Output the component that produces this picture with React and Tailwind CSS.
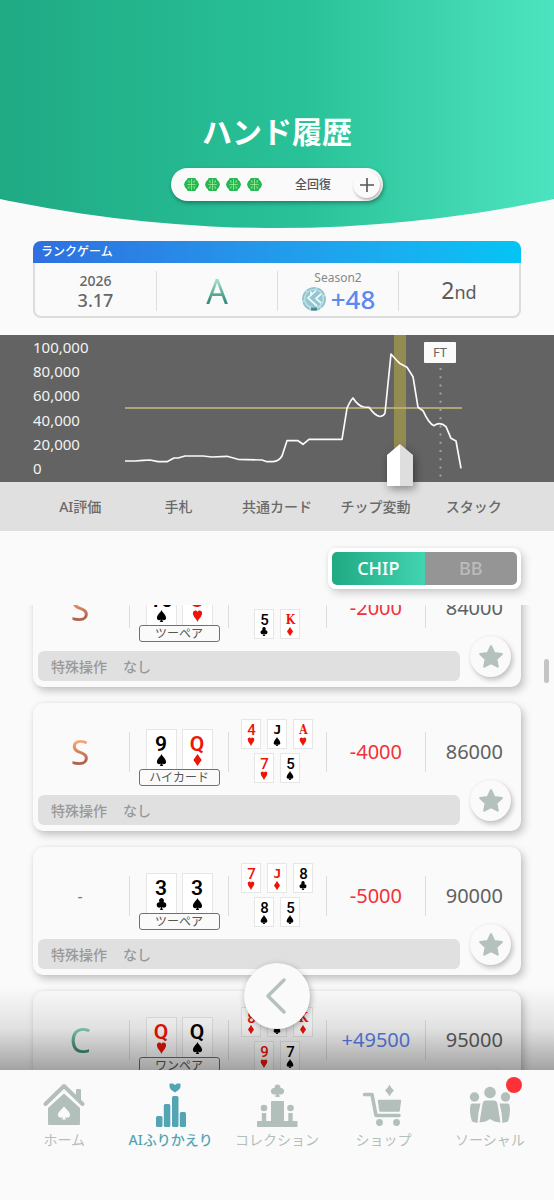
import React, { useState } from 'react';

const SUIT_PATHS = {
  spade: 'M12 0C14 5 22 10 22 16c0 4-5 6-8 3 0 3 1 4 2 5H8c1-1 2-2 2-5-3 3-8 1-8-3C2 10 10 5 12 0z',
  heart: 'M12 24C10 18 2 13 2 6.500 2 1 9-1 12 4c3-5 10-3 10 2.500C22 13 14 18 12 24z',
  diamond: 'M12 0l9 12-9 12L3 12z',
  club: 'M12 0a5.200 5.200 0 0 1 4 8.600 5.400 5.400 0 1 1-2.500 9.400c0 3 1 5 2.500 6H8c1.500-1 2.500-3 2.500-6A5.400 5.400 0 1 1 8 8.600 5.200 5.200 0 0 1 12 0z',
};

const SUITS = { s: 'spade', h: 'heart', d: 'diamond', c: 'club' };

const HANDS = [
  {
    id: 1,
    grade: 'S',
    hole: ['10s', '8h'],
    made: 'ツーペア',
    board: ['10h', '8c', '2d', '5c', 'Kd'],
    change: '-2000',
    stack: '84000',
  },
  {
    id: 2,
    grade: 'S',
    hole: ['9s', 'Qd'],
    made: 'ハイカード',
    board: ['4h', 'Js', 'Ah', '7h', '5s'],
    change: '-4000',
    stack: '86000',
  },
  {
    id: 3,
    grade: '-',
    hole: ['3c', '3s'],
    made: 'ツーペア',
    board: ['7h', 'Jd', '8c', '8s', '5s'],
    change: '-5000',
    stack: '90000',
  },
  {
    id: 4,
    grade: 'C',
    hole: ['Qh', 'Qs'],
    made: 'ワンペア',
    board: ['8d', '4s', 'Kd', '9h', '7s'],
    change: '+49500',
    stack: '95000',
  },
];

const COLUMNS = ['AI評価', '手札', '共通カード', 'チップ変動', 'スタック'];
const AXIS = ['100,000', '80,000', '60,000', '40,000', '20,000', '0'];

const GRADE_COLORS = {
  S: 'bg-linear-to-b from-[#f0a878] from-25% to-[#b0604c] to-75% bg-clip-text text-transparent',
  A: 'bg-linear-to-b from-[#9adcc8] from-25% to-[#3a9080] to-75% bg-clip-text text-transparent',
  C: 'bg-linear-to-b from-[#84cdb8] from-25% to-[#3f8f7c] to-75% bg-clip-text text-transparent',
};

const Suit = ({ name, className }) => (
  <svg viewBox="0 0 24 24" preserveAspectRatio="none" fill="currentColor" className={className}>
    <path d={SUIT_PATHS[name]} />
  </svg>
);

const rankFont = (rank) => {
  if (rank === 'J') return "font-['DejaVu_Sans_Mono',monospace] font-bold text-[13px]";
  if (rank === 'K' || rank === 'A') return "font-['DejaVu_Serif_Condensed','DejaVu_Serif',serif] font-bold text-[12px]";
  return "font-['Roboto',sans-serif] font-medium text-[15px]";
};

const PlayingCard = ({ code, large }) => {
  const rank = code.slice(0, -1);
  const suit = SUITS[code.slice(-1)];
  const color = suit === 'heart' || suit === 'diamond' ? 'text-[#ee1408]' : 'text-black';

  if (large) {
    return (
      <div className={`flex h-10 w-[31px] flex-col items-center border border-b-0 border-[#e6e6e6] bg-white pt-1 ${color}`}>
        <span className="font-['Roboto',sans-serif] text-[21px] leading-5 font-semibold">{rank}</span>
        <Suit name={suit} className="h-3 w-[11px]" />
      </div>
    );
  }
  return (
    <div className={`flex h-[30px] w-5 flex-col items-center border border-[#e6e6e6] bg-white pt-[3px] ${color}`}>
      <span className={`leading-[14px] ${rankFont(rank)}`}>{rank}</span>
      <Suit name={suit} className="h-[9px] w-2" />
    </div>
  );
};

const Grade = ({ value }) =>
  value === '-' ? (
    <span className="text-[16px] text-[#777]">-</span>
  ) : (
    <span className={`text-[34px] leading-10 ${GRADE_COLORS[value]}`}>{value}</span>
  );

const Divided = ({ children }) => (
  <div className="flex h-10 items-center justify-center self-center border-l border-[#dedede]">{children}</div>
);

const HandCard = ({ hand }) => {
  const [starred, setStarred] = useState(false);
  const changeColor = hand.change.startsWith('-') ? 'text-[#f0323c]' : 'text-[#5a82ee]';

  return (
    <article className="rounded-[10px] bg-[#fafafa] pb-[6px] shadow-[3px_4px_9px_rgba(0,0,0,0.22),0_0_4px_rgba(0,0,0,0.06)]">
      <div className="-mx-[2px] grid h-[92px] grid-cols-5 pt-[6px]">
        <div className="flex items-center justify-center">
          <Grade value={hand.grade} />
        </div>
        <Divided>
          <div className="flex h-[88px] flex-col items-center pt-[21px]">
            <div className="flex gap-[5px]">
              {hand.hole.map((code) => (
                <PlayingCard key={code} code={code} large />
              ))}
            </div>
            <div className="h-[17px] w-[81px] rounded-[3px] border border-[#707070] bg-[#fafafa] text-center text-[12px] leading-[15px] text-[#555]">
              {hand.made}
            </div>
          </div>
        </Divided>
        <Divided>
          <div className="flex h-[88px] w-[72px] flex-wrap content-start justify-center gap-x-[6px] gap-y-1 pt-[11px]">
            {hand.board.map((code) => (
              <PlayingCard key={code} code={code} />
            ))}
          </div>
        </Divided>
        <Divided>
          <span className={`text-[20px] leading-6 ${changeColor}`}>{hand.change}</span>
        </Divided>
        <Divided>
          <span className="text-[20px] leading-6 text-[#616161]">{hand.stack}</span>
        </Divided>
      </div>

      <div className="flex items-end gap-[10px] pr-[10px] pl-[5px]">
        <div className="flex h-[30px] flex-1 items-center gap-4 rounded-[6px] bg-[#e0e0e0] px-[13px] text-[14px] font-medium text-[#999]">
          <span>特殊操作</span>
          <span>なし</span>
        </div>
        <button
          type="button"
          aria-label="お気に入り"
          aria-pressed={starred}
          onClick={() => setStarred(!starred)}
          className="-mt-[15px] mb-1 flex size-[41px] items-center justify-center rounded-full bg-[#fafafa] shadow-[2px_3px_5px_rgba(0,0,0,0.22),0_0_3px_rgba(0,0,0,0.06)]"
        >
          <svg
            viewBox="0 0 24 24"
            className={`size-[26px] ${starred ? 'text-[#f2b840]' : 'text-[#b5c2bc]'}`}
            fill="currentColor"
            stroke="currentColor"
            strokeWidth="2"
            strokeLinejoin="round"
          >
            <path d="M12 2l3 6.300 7 .9-5.100 4.800 1.300 6.900L12 17.600l-6.200 3.300L7.100 14 2 9.200l7-.9z" />
          </svg>
        </button>
      </div>
    </article>
  );
};

const BrainIcon = () => (
  <svg viewBox="0 0 16 16" className="size-[15px]">
    <path d="M4 1h8l1 2 2 2 1 3-1 3-2 2-1 2H4l-1-2-2-2-1-3 1-3 2-2z" fill="#25b850" />
    <path
      d="M8 2v12M3.500 8h9M5 3.500V5.500h1.500M11 3.500V5.500H9.500M5 12.500v-2h1.500M11 12.500v-2H9.500"
      stroke="#a4eea0"
      strokeWidth="0.800"
      fill="none"
    />
  </svg>
);

const CoinIcon = () => (
  <svg viewBox="0 0 26 26" className="size-[26px]">
    <circle cx="13" cy="13" r="12" fill="#b9dde3" />
    <circle cx="13" cy="13" r="11" fill="none" stroke="#8fc0c9" strokeWidth="1.500" strokeDasharray="9 2" />
    <circle cx="13" cy="12.500" r="8.500" fill="#93c6cf" />
    <path d="M15 4.500L7 12l9 8M10 5.500v4M20 8l-5 4.500 5 4.500" stroke="#eefafb" strokeWidth="1.700" fill="none" />
    <path d="M10 21.500h6v3h-6z" fill="#4d8793" />
  </svg>
);

const StackChart = () => {
  const [position, setPosition] = useState(816);

  return (
    <section className="relative z-10 flex bg-[#636363] pr-[92px]">
      <div className="flex h-[147px] w-[125px] shrink-0 flex-col justify-between pb-[2px] pl-[33px] text-[15px] leading-6 text-[#f2f2f2]">
        {AXIS.map((label) => (
          <span key={label}>{label}</span>
        ))}
      </div>
      <div className="relative flex-1">
        {/* selected hand */}
        <div
          className="absolute inset-y-0 w-3 -translate-x-1/2 bg-[#938c52]"
          style={{ left: `${position / 10}%` }}
        />
        <svg viewBox="0 0 337 147" preserveAspectRatio="none" className="relative block h-[147px] w-full" fill="none">
          <path d="M0 73H337" stroke="#c5bd7c" strokeWidth="1.500" />
          <path d="M315.500 33V143" stroke="#a4a4a4" strokeWidth="2" strokeDasharray="2 6.200" />
          <path
            d="M0 126L10 126 18 125.300 25 125 33 126.700 42 126.700 49 123 53 123 60 121 78 121 87 122 102 121.300 113 124.300 137 125 142 126.700 148 126.700Q154 126 157 121L162 105.700 173 105.700 178 109.300 184 104.300 217 104.300 222 73.300Q225 66 228 63 233 71 239 72L244 72.300Q250 81 255 81.500 259 81 260 78L266 19Q272 26 275 28.500L282 32.300 288 41.700 293 72.300 298 75.700Q304 89 309 90.700 315 86 321 91.700L326 103.300 331 106 336 133.300"
            stroke="#fafafa"
            strokeWidth="1.700"
            strokeLinejoin="round"
          />
        </svg>
        <span className="absolute top-[7px] left-[93.5%] h-[21px] w-8 -translate-x-1/2 rounded-[1px] bg-[#fafafa] text-center text-[13px] leading-[21px] text-[#666]">
          FT
        </span>
        <input
          type="range"
          aria-label="ハンド位置"
          min="0"
          max="1000"
          value={position}
          onChange={(e) => setPosition(Number(e.target.value))}
          className="absolute top-[109px] -right-[13px] -left-[13px] h-[42px] appearance-none bg-transparent drop-shadow-[2px_3px_4px_rgba(0,0,0,0.4)] [&::-webkit-slider-thumb]:h-[42px] [&::-webkit-slider-thumb]:w-[26px] [&::-webkit-slider-thumb]:appearance-none [&::-webkit-slider-thumb]:bg-linear-to-r [&::-webkit-slider-thumb]:from-white [&::-webkit-slider-thumb]:from-50% [&::-webkit-slider-thumb]:to-[#dedede] [&::-webkit-slider-thumb]:to-50% [&::-webkit-slider-thumb]:[clip-path:polygon(50%_0,100%_26%,100%_100%,0_100%,0_26%)]"
        />
      </div>
    </section>
  );
};

const HomeIcon = () => (
  <svg viewBox="0 0 44 46" className="h-[46px] w-11" fill="currentColor">
    <path d="M3.500 22L22 4l18.500 18" fill="none" stroke="currentColor" strokeWidth="4" strokeLinecap="round" strokeLinejoin="round" />
    <path d="M34.500 7.500h4V18l-4-4z" stroke="currentColor" strokeLinejoin="round" />
    <path
      fillRule="evenodd"
      d="M22 11.500L38 26v16q0 1-1 1H7q-1 0-1-1V26zM22 24c1 3 6 5 6 9 0 2.500-3 3.500-5 2l1 2.500h-4l1-2.500c-2 1.500-5 .5-5-2 0-4 5-6 6-9z"
    />
  </svg>
);

const ReviewIcon = () => (
  <svg viewBox="0 0 44 46" className="h-[46px] w-11" fill="currentColor">
    <path d="M26 10.500C24 9 20.500 7.500 20.500 4V2q0-.5.500-.5h3l2 1.500 2-1.500h3q.5 0 .5.500v2c0 3.500-3.500 5-5.500 6.500z" />
    <rect x="7" y="34" width="6.500" height="11" rx="1.500" />
    <rect x="14.800" y="22" width="6.500" height="23" rx="1.500" />
    <rect x="23" y="14" width="6.500" height="31" rx="1.500" />
    <rect x="30.800" y="30" width="6.200" height="15" rx="1.500" />
  </svg>
);

const CollectionIcon = () => (
  <svg viewBox="0 0 44 46" className="h-[46px] w-11" fill="currentColor">
    <path d="M22.500 2.500a3 3 0 0 1 3 3.500 3.300 3.300 0 1 1-1.500 6l.8 3h-4.600l.8-3a3.300 3.300 0 1 1-1.500-6 3 3 0 0 1 3-3.500z" />
    <rect x="16" y="19" width="13" height="22" rx="1" />
    <rect x="2" y="39" width="40.500" height="6" rx="0.800" />
    <circle cx="9" cy="26" r="3.300" />
    <circle cx="35.500" cy="26" r="3.300" />
    <rect x="6.800" y="31" width="4.400" height="9" />
    <rect x="33.300" y="31" width="4.400" height="9" />
  </svg>
);

const ShopIcon = () => (
  <svg viewBox="0 0 44 46" className="h-[46px] w-11" fill="currentColor">
    <path d="M3.500 12.500H11L15 33.500h23" fill="none" stroke="currentColor" strokeWidth="3.600" strokeLinecap="round" strokeLinejoin="round" />
    <path d="M17.500 18.500H39.500L38 29H19z" stroke="currentColor" strokeWidth="1.500" strokeLinejoin="round" />
    <circle cx="18.500" cy="40.500" r="3.400" />
    <circle cx="35.500" cy="40.500" r="3.400" />
    <path d="M28.500 2.500c1 2.500 3 4.500 4.500 6-1.500 1.500-3.500 3.500-4.500 6-1-2.500-3-4.500-4.500-6 1.500-1.500 3.500-3.500 4.500-6z" />
  </svg>
);

const SocialIcon = () => (
  <svg viewBox="0 0 44 46" className="h-[46px] w-11" fill="currentColor">
    <circle cx="22" cy="10.500" r="5.800" />
    <circle cx="6.500" cy="15" r="4.700" />
    <circle cx="37.500" cy="15" r="4.700" />
    <path d="M18 18.500h8q3 0 3.600 4L32.500 40.500Q26 40 22 37q-4 3-10.500 3.500L14.400 22.500q.6-4 3.600-4z" />
    <path d="M4 21.500h8.500Q10 30 9.500 41L4 39.500Q1 30 2.500 23 3 21.500 4 21.500z" />
    <path d="M40 21.500h-8.500Q34 30 34.500 41L40 39.500Q43 30 41.500 23 41 21.500 40 21.500z" />
  </svg>
);

const NAV_ITEMS = [
  { label: 'ホーム', icon: HomeIcon },
  { label: 'AIふりかえり', icon: ReviewIcon, active: true },
  { label: 'コレクション', icon: CollectionIcon },
  { label: 'ショップ', icon: ShopIcon },
  { label: 'ソーシャル', icon: SocialIcon, badge: true },
];

const UNITS = ['CHIP', 'BB'];

const App = () => {
  const [unit, setUnit] = useState('CHIP');

  return (
    <div className="flex h-screen flex-col overflow-hidden bg-[#fafafa] font-['Noto_Sans','Noto_Sans_CJK_JP',sans-serif]">
      {/* Header */}
      <header className="flex shrink-0 flex-col items-center bg-linear-to-r from-[#1faa84] via-[#29c298] via-55% to-[#4ce4c0] pt-[110px] pb-[27px] [clip-path:circle(1337px_at_50%_-1109px)]">
        <h1 className="text-[30px] leading-[44px] font-bold text-white">ハンド履歴</h1>
        <div className="mt-[14px] flex h-[33px] w-[212px] items-center rounded-full bg-[#fafafa] pr-[3px] pl-[13px] shadow-[1px_2px_4px_rgba(0,0,0,0.35)]">
          <div className="flex gap-[6px]">
            <BrainIcon />
            <BrainIcon />
            <BrainIcon />
            <BrainIcon />
          </div>
          <span className="flex-1 pl-[11px] text-center text-[12px] font-medium text-[#555]">全回復</span>
          <button
            type="button"
            aria-label="回復する"
            className="flex size-[27px] items-center justify-center rounded-full bg-[#fafafa] shadow-[1px_2px_3px_rgba(0,0,0,0.28)]"
          >
            <svg viewBox="0 0 16 16" className="size-4" stroke="#555" strokeWidth="1.600">
              <path d="M8 1v14M1 8h14" />
            </svg>
          </button>
        </div>
      </header>

      {/* Game summary */}
      <section className="mx-[33px] mt-[13px] shrink-0">
        <h2 className="h-[22px] rounded-t-[8px] bg-linear-to-r from-[#2f6fe0] to-[#04c4f4] px-2 text-[12px] leading-[22px] font-medium text-white">
          ランクゲーム
        </h2>
        <div className="grid h-[55px] grid-cols-4 rounded-b-[8px] border-2 border-t-0 border-[#dcdcdc] pt-[2px]">
          <div className="flex flex-col items-center justify-center text-[#666]">
            <span className="text-[14px] leading-[18px] font-medium">2026</span>
            <span className="text-[18px] leading-5 font-medium">3.17</span>
          </div>
          <Divided>
            <Grade value="A" />
          </Divided>
          <Divided>
            <div className="flex flex-col items-center">
              <span className="text-[12px] leading-4 text-[#888]">Season2</span>
              <span className="flex items-center gap-1 text-[26px] leading-[26px] font-medium text-[#5a8af0]">
                <CoinIcon />
                +48
              </span>
            </div>
          </Divided>
          <Divided>
            <span className="text-[23px] text-[#5c5c5c]">
              2<span className="text-[18px]">nd</span>
            </span>
          </Divided>
        </div>
      </section>

      <div className="mt-[17px] shrink-0">
        <StackChart />
        <div className="bg-[#e0e0e0] px-[31px]">
          <div className="grid h-[49px] grid-cols-5 items-center text-center text-[14px] font-medium text-[#6a6a6a]">
            {COLUMNS.map((column) => (
              <span key={column}>{column}</span>
            ))}
          </div>
        </div>
      </div>

      {/* Unit switch */}
      <div className="flex shrink-0 justify-end px-[33px] pt-[17px] pb-4">
        <div className="flex w-[193px] rounded-[8px] bg-white p-1 shadow-[3px_4px_8px_rgba(0,0,0,0.18),0_0_4px_rgba(0,0,0,0.06)]">
          {UNITS.map((name) => (
            <button
              key={name}
              type="button"
              aria-pressed={unit === name}
              onClick={() => setUnit(name)}
              className={`h-[33px] flex-1 text-[18px] font-medium first:rounded-l-[5px] last:rounded-r-[5px] ${
                unit === name
                  ? 'bg-linear-to-r from-[#1faa84] to-[#42d3b0] text-white'
                  : 'bg-[#959595] text-[#bcbcbc]'
              }`}
            >
              {name}
            </button>
          ))}
        </div>
      </div>

      {/* Hand list */}
      <main className="relative min-h-0 flex-1 overflow-hidden">
        <div className="-mt-[46px] flex flex-col gap-4 px-[33px]">
          {HANDS.map((hand) => (
            <HandCard key={hand.id} hand={hand} />
          ))}
        </div>
        <div className="absolute top-[54px] right-[5px] h-6 w-[5px] rounded-full bg-[#c4c4c4]" />
        <div className="pointer-events-none absolute inset-x-0 bottom-0 h-[84px] bg-linear-to-b from-black/0 via-black/10 to-black/35" />
        <button
          type="button"
          aria-label="戻る"
          className="absolute bottom-[41px] left-1/2 flex size-[66px] -translate-x-1/2 items-center justify-center rounded-full bg-[#fafafa] shadow-[1px_2px_6px_rgba(0,0,0,0.3)]"
        >
          <svg
            viewBox="0 0 24 40"
            className="h-10 w-6 text-[#b5c2bc]"
            fill="none"
            stroke="currentColor"
            strokeWidth="3.500"
            strokeLinecap="round"
            strokeLinejoin="round"
          >
            <path d="M19 4L3 20l16 16" />
          </svg>
        </button>
      </main>

      {/* Bottom navigation */}
      <nav className="grid h-[130px] shrink-0 grid-cols-5 content-start bg-[#fafafa] px-[11px] pt-3">
        {NAV_ITEMS.map(({ label, icon: Icon, active, badge }) => (
          <a
            key={label}
            href="#"
            className={`relative flex flex-col items-center text-[14px] leading-6 whitespace-nowrap ${
              active ? 'font-medium text-[#54a5b4]' : 'text-[#b3bfba]'
            }`}
          >
            <Icon />
            {label}
            {badge && <span className="absolute -top-[5px] left-1/2 ml-4 size-4 rounded-full bg-[#ff3138]" />}
          </a>
        ))}
      </nav>
    </div>
  );
};

export default App;
